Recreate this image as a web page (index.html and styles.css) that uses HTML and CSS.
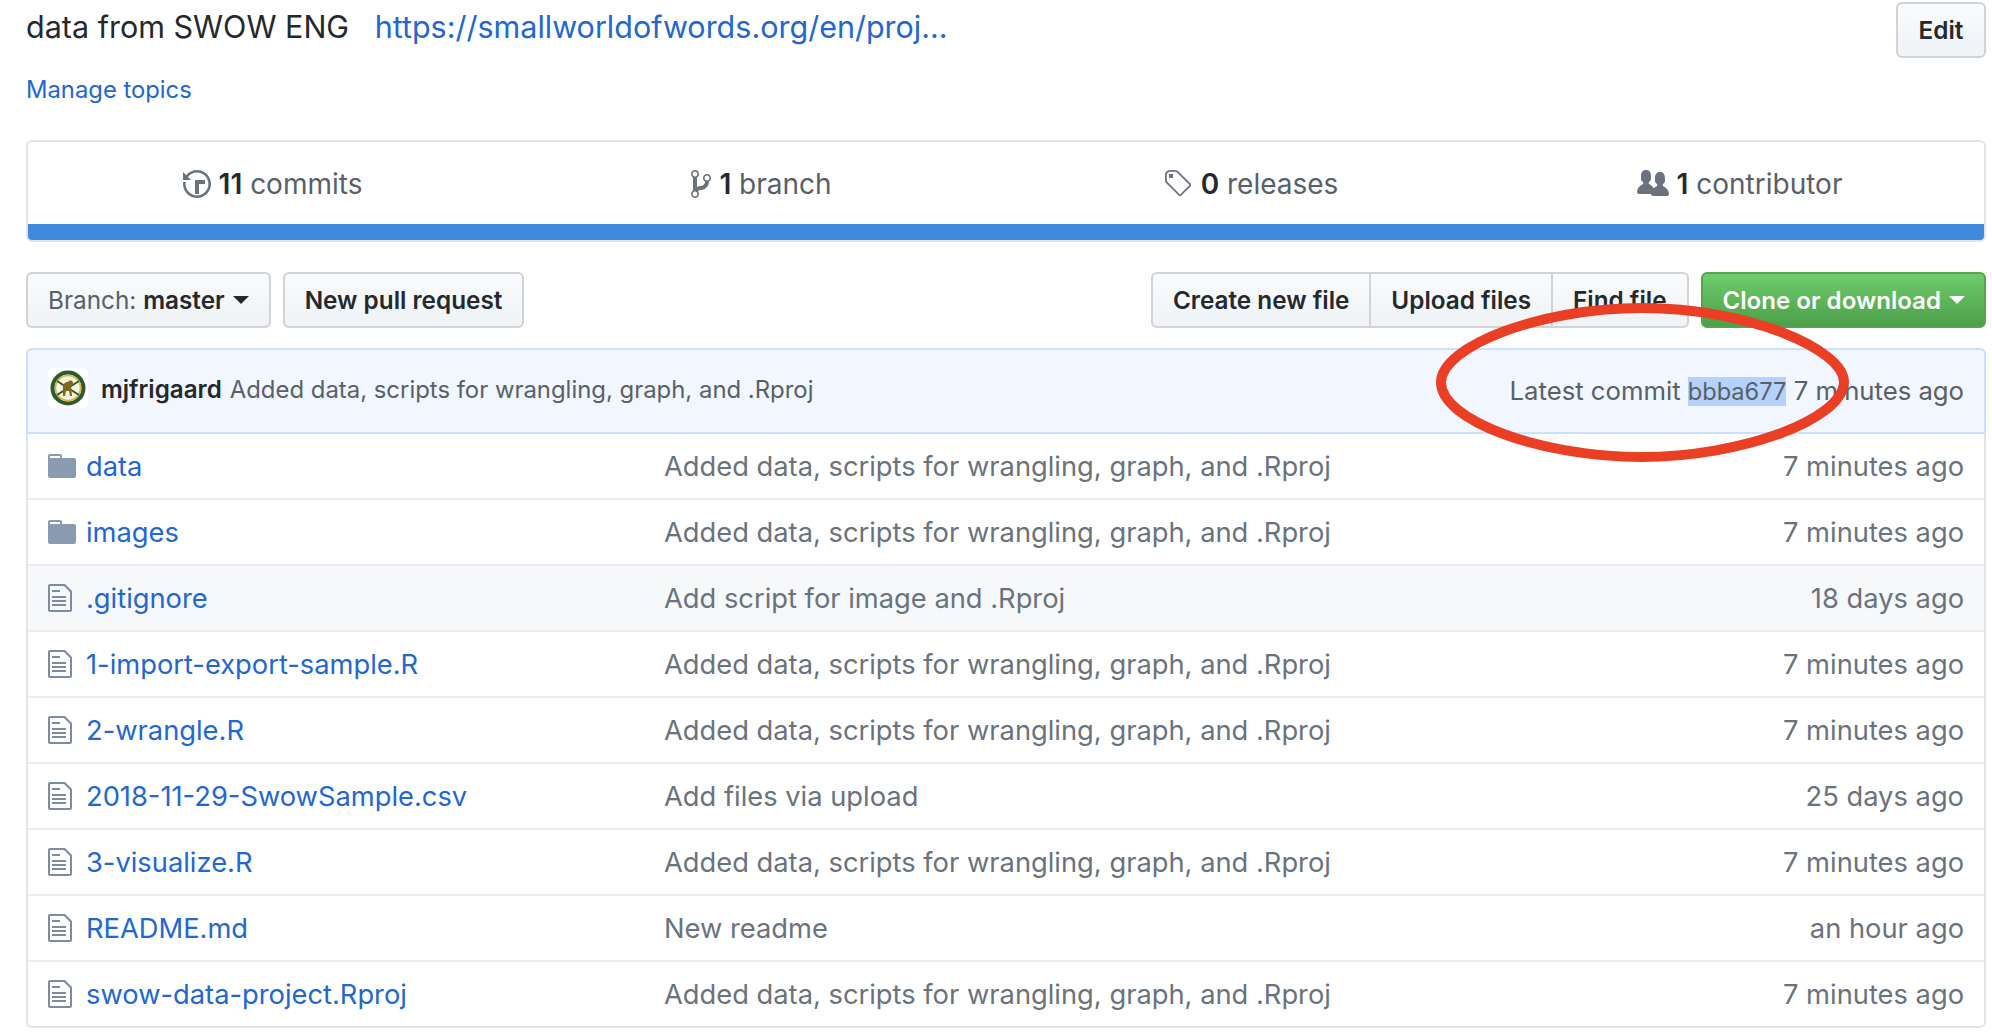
FILE: index.html
```html
<!doctype html>
<html>
<head>
	<title>swow-data-project</title>
	<link rel="stylesheet" href="styles.css">
</head>
<body>
	<svg width="0" height="0" class="defs">
		<symbol id="i-file" viewBox="0 0 12 16"><path d="M6 5H2V4h4v1zM2 8h7V7H2v1zm0 2h7V9H2v1zm0 2h7v-1H2v1zm10-7.5V14c0 .55-.45 1-1 1H1c-.55 0-1-.45-1-1V2c0-.55.45-1 1-1h7.5L12 4.5zM11 5L8 2H1v12h10V5z"/></symbol>
		<symbol id="i-dir" viewBox="0 0 14 16"><path d="M13 4H7V3c0-.66-.31-1-1-1H1c-.55 0-1 .45-1 1v10c0 .55.45 1 1 1h12c.55 0 1-.45 1-1V5c0-.55-.45-1-1-1zM6 4H1V3h5v1z"/></symbol>
	</svg>

	<div class="page">
		<div class="desc">
			<div class="desc-text">data from SWOW ENG <a href="#" class="desc-link">https://smallworldofwords.org/en/proj...</a></div>
			<div class="btn edit">Edit</div>
		</div>
		<div class="topics"><a href="#">Manage topics</a></div>

		<div class="summary">
			<div class="stats">
				<div class="stat">
					<svg class="ic" width="28" height="32" viewBox="0 0 14 16"><path d="M8 13H6V6h5v2H8v5zM7 1C4.81 1 2.87 2.02 1.59 3.59L0 2v4h4L2.5 4.5C3.55 3.17 5.17 2.3 7 2.3c3.14 0 5.7 2.56 5.7 5.7s-2.56 5.7-5.7 5.7A5.71 5.71 0 0 1 1.3 8c0-.34.03-.67.09-1H.08C.03 7.33 0 7.66 0 8c0 3.86 3.14 7 7 7s7-3.14 7-7-3.14-7-7-7z"/></svg>
					<span><b>11</b> commits</span>
				</div>
				<div class="stat">
					<svg class="ic" width="20" height="32" viewBox="0 0 10 16"><path d="M10 5c0-1.11-.89-2-2-2a1.993 1.993 0 0 0-1 3.72v.3c-.02.52-.23.98-.63 1.38-.4.4-.86.61-1.38.63-.83.02-1.48.16-2 .45V4.72a1.993 1.993 0 0 0-1-3.72C.88 1 0 1.89 0 3a2 2 0 0 0 1 1.72v6.56c-.59.35-1 .99-1 1.72 0 1.11.89 2 2 2 1.11 0 2-.89 2-2 0-.53-.2-1-.53-1.36.09-.06.48-.41.59-.47.25-.11.56-.17.94-.17 1.05-.05 1.95-.45 2.75-1.25S8.95 7.77 9 6.73h-.02C9.59 6.37 10 5.73 10 5zM2 1.8c.66 0 1.2.55 1.2 1.2 0 .65-.55 1.2-1.2 1.2C1.35 4.2.8 3.65.8 3c0-.65.55-1.2 1.2-1.2zm0 12.41c-.66 0-1.2-.55-1.2-1.2 0-.65.55-1.2 1.2-1.2.65 0 1.2.55 1.2 1.2 0 .65-.55 1.2-1.2 1.2zm6-8c-.66 0-1.2-.55-1.2-1.2 0-.65.55-1.2 1.2-1.2.65 0 1.2.55 1.2 1.2 0 .65-.55 1.2-1.2 1.2z"/></svg>
					<span><b>1</b> branch</span>
				</div>
				<div class="stat">
					<svg class="ic" width="30" height="32" viewBox="0 0 15 16"><path d="M7.73 1.73C7.26 1.26 6.62 1 5.96 1H3.5C2.13 1 1 2.13 1 3.5v2.47c0 .66.27 1.3.73 1.77l6.06 6.06c.39.39 1.02.39 1.41 0l4.59-4.59a.996.996 0 0 0 0-1.41L7.73 1.73zM2.38 7.09c-.31-.3-.47-.7-.47-1.13V3.5c0-.88.72-1.59 1.59-1.59h2.47c.42 0 .83.16 1.13.47l6.14 6.13-4.73 4.73-6.13-6.15zM3.01 3h2v2H3V3h.01z"/></svg>
					<span><b>0</b> releases</span>
				</div>
				<div class="stat">
					<svg class="ic" width="32" height="32" viewBox="0 0 16 16"><path d="M16 12.999c0 .439-.45 1-1 1H7.995c-.539 0-.994-.447-.995-.999H1c-.54 0-1-.561-1-1 0-2.634 3-4 3-4s.229-.409 0-1c-.841-.621-1.058-.59-1-3 .058-2.419 1.367-3 2.5-3s2.442.58 2.5 3c.058 2.41-.159 2.379-1 3-.229.59 0 1 0 1s1.549.711 2.42 2.088C9.196 9.369 10 8.999 10 8.999s.229-.409 0-1c-.841-.62-1.058-.59-1-3 .058-2.419 1.367-3 2.5-3s2.437.581 2.495 3c.059 2.41-.158 2.38-1 3-.229.59 0 1 0 1s3.005 1.366 3.005 4z"/></svg>
					<span><b>1</b> contributor</span>
				</div>
			</div>
			<div class="langbar"></div>
		</div>

		<div class="toolbar">
			<div class="btn branch">Branch: <b>master</b><i class="caret"></i></div>
			<div class="btn">New pull request</div>
			<div class="spacer"></div>
			<div class="btn-group">
				<div class="btn">Create new file</div>
				<div class="btn">Upload files</div>
				<div class="btn">Find file</div>
			</div>
			<div class="btn green">Clone or download<i class="caret"></i></div>
		</div>

		<div class="files">
			<div class="commit">
				<svg class="avatar" width="40" height="40" viewBox="0 0 40 40">
					<rect width="40" height="40" rx="4" fill="#fff"/>
					<circle cx="20" cy="20" r="15.5" fill="#f7f3df" stroke="#2c5a2e" stroke-width="4"/>
					<circle cx="20" cy="20" r="12.5" fill="none" stroke="#d9b23c" stroke-width="1.5"/>
					<path d="M9 13l22 14M31 13L9 27" stroke="#2c5a2e" stroke-width="2"/>
					<path d="M15 28v-9c0-3 2-5 5-5 1-2 5-2 5 1 0 2-1 3-2 3l1 10h-2l-1-5h-3l-1 5z" fill="#7c6a1e"/>
				</svg>
				<span class="author">mjfrigaard</span>
				<span class="commit-msg">Added data, scripts for wrangling, graph, and .Rproj</span>
				<span class="spacer"></span>
				<span class="latest">Latest commit <span class="sha">bbba677</span> 7 minutes ago</span>
			</div>
			<div class="row"><svg class="ic dir" width="28" height="32"><use href="#i-dir"/></svg><a href="#" class="name">data</a><span class="msg">Added data, scripts for wrangling, graph, and .Rproj</span><span class="age">7 minutes ago</span></div>
			<div class="row"><svg class="ic dir" width="28" height="32"><use href="#i-dir"/></svg><a href="#" class="name">images</a><span class="msg">Added data, scripts for wrangling, graph, and .Rproj</span><span class="age">7 minutes ago</span></div>
			<div class="row hover"><svg class="ic file" width="24" height="32"><use href="#i-file"/></svg><a href="#" class="name">.gitignore</a><span class="msg">Add script for image and .Rproj</span><span class="age">18 days ago</span></div>
			<div class="row"><svg class="ic file" width="24" height="32"><use href="#i-file"/></svg><a href="#" class="name">1-import-export-sample.R</a><span class="msg">Added data, scripts for wrangling, graph, and .Rproj</span><span class="age">7 minutes ago</span></div>
			<div class="row"><svg class="ic file" width="24" height="32"><use href="#i-file"/></svg><a href="#" class="name">2-wrangle.R</a><span class="msg">Added data, scripts for wrangling, graph, and .Rproj</span><span class="age">7 minutes ago</span></div>
			<div class="row"><svg class="ic file" width="24" height="32"><use href="#i-file"/></svg><a href="#" class="name">2018-11-29-SwowSample.csv</a><span class="msg">Add files via upload</span><span class="age">25 days ago</span></div>
			<div class="row"><svg class="ic file" width="24" height="32"><use href="#i-file"/></svg><a href="#" class="name">3-visualize.R</a><span class="msg">Added data, scripts for wrangling, graph, and .Rproj</span><span class="age">7 minutes ago</span></div>
			<div class="row"><svg class="ic file" width="24" height="32"><use href="#i-file"/></svg><a href="#" class="name">README.md</a><span class="msg">New readme</span><span class="age">an hour ago</span></div>
			<div class="row"><svg class="ic file" width="24" height="32"><use href="#i-file"/></svg><a href="#" class="name">swow-data-project.Rproj</a><span class="msg">Added data, scripts for wrangling, graph, and .Rproj</span><span class="age">7 minutes ago</span></div>
		</div>
	</div>

	<!-- red marker drawn over the screenshot -->
	<svg class="marker" width="425" height="170" viewBox="0 0 425 170">
		<path d="M212 10C110 10 12 48 11 84C10 122 110 159 212 159C310 159 413 122 414 84C414 52 320 10 212 10z" fill="none" stroke="#ea3f24" stroke-width="10"/>
	</svg>
</body>
</html>
```

FILE: styles.css
```css
html, body {margin: 0; padding: 0; background: #fff;}
body {font-family: Inter, "Liberation Sans", sans-serif; font-size: 27.3px; color: #24292e; position: relative; height: 1034px; overflow: hidden;}
a {color: #2367d1; text-decoration: none;}
.defs {position: absolute;}
.page {padding: 2px 6px 0 26px;}

.desc {display: flex; justify-content: space-between; height: 56px;}
.desc-text {font-size: 30.5px; line-height: 50px;}
.desc-link {margin-left: 17px;}
.topics {font-size: 23.8px; line-height: 30px; margin-top: 17px;}

.summary {margin-top: 35px; border: 2px solid #e1e4e8; border-radius: 6px; overflow: hidden;}
.stats {box-sizing: border-box; display: flex; height: 82px; padding-top: 2px;}
.stat {flex: 1; display: flex; align-items: center; justify-content: center; gap: 8px; color: #586069; font-size: 28px;}
.stat b {font-weight: 600; color: #24292e;}
.ic {fill: #6a737d; flex: none;}
.ic.dir {fill: #8a9ab0;}
.ic.file {fill: #7d8ca6;}
.langbar {height: 16px; background: #4189df;}

.toolbar {display: flex; gap: 12px; margin-top: 30px;}
.spacer {flex: 1;}
.btn {box-sizing: border-box; height: 56px; padding: 0 20px; display: flex; align-items: center; font-size: 24.3px; font-weight: 600; white-space: pre; border: 2px solid #d1d3d6; border-radius: 6px; background: linear-gradient(#fafbfc, #eff3f6);}
.edit {width: 90px; padding: 0; justify-content: center;}
.branch {font-weight: 400; color: #586069;}
.branch b {font-weight: 600; color: #24292e;}
.caret {display: inline-block; margin-left: 8px; border: 8px solid transparent; border-top-color: currentColor; border-bottom: 0;}
.branch .caret {color: #24292e;}
.btn-group {display: flex;}
.btn-group .btn {border-radius: 0; margin-left: -2px;}
.btn-group .btn:first-child {border-radius: 6px 0 0 6px; margin-left: 0;}
.btn-group .btn:last-child {border-radius: 0 6px 6px 0;}
.green {color: #fff; font-size: 24.1px; padding-right: 19px; border-color: #54a551; background: linear-gradient(#6fcc6b, #4c9f49);}

.files {margin-top: 20px; border: 2px solid #e1e4e8; border-top: 0; border-radius: 6px;}
.commit {box-sizing: border-box; height: 86px; margin: 0 -2px; padding: 0 20px; display: flex; align-items: center; background: #f2f7ff; border: 2px solid #c8e1ff; border-radius: 6px 6px 0 0; font-size: 23.9px; color: #586069;}
.avatar {margin-right: 13px; flex: none; position: relative; top: -3px;}
.author {font-weight: 600; color: #24292e; margin: 0 8px 3px 0; font-size: 24.2px;}
.commit-msg {margin-bottom: 3px;}
.latest {font-size: 25.7px; margin-bottom: 1px;}
.sha {background: #b4d2fb; font-size: 23.6px;}

.row {box-sizing: border-box; height: 66px; padding: 0 20px; display: flex; align-items: center; border-top: 2px solid #eaecef; color: #6a737d;}
.commit + .row {height: 64px; border-top: 0;}
.row.hover {background: #f6f8fa;}
.name {width: 578px; flex: none;}
.ic.dir + .name {margin-left: 10px;}
.ic.file + .name {margin-left: 14px;}
.msg {flex: 1;}
.age {flex: none;}

.marker {position: absolute; left: 1430px; top: 298px;}
```
